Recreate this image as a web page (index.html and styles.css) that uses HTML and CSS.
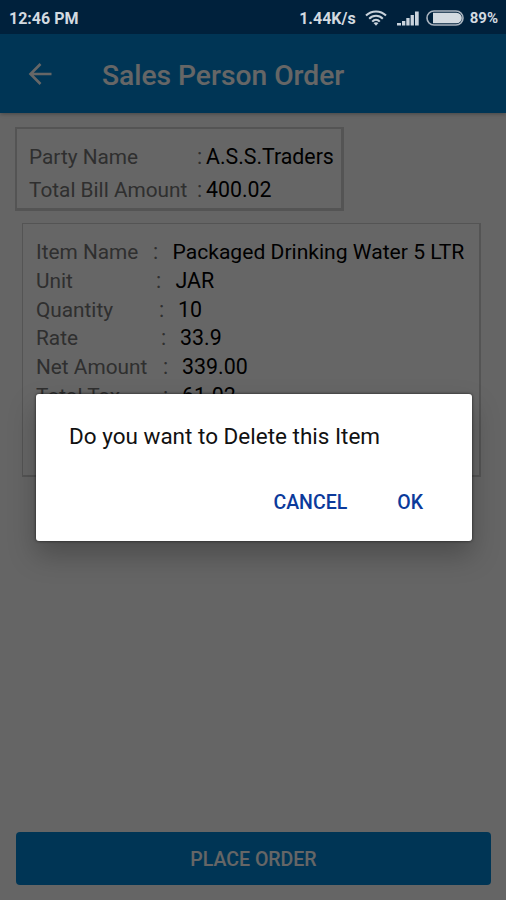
FILE: index.html
```html
<!DOCTYPE html>
<html lang="en">

<head>
    <meta charset="UTF-8">
    <meta name="viewport" content="width=device-width, initial-scale=1.0">
    <title>Sales Person Order</title>
    <link rel="stylesheet" href="styles.css">
</head>

<body>
    <div class="statusbar">
        <span class="time">12:46 PM</span>
        <span class="speed">1.44K/s</span>
        <svg class="wifi" width="22" height="16" viewBox="0 0 22 16">
            <g fill="none" stroke="#c9d3dc" stroke-width="2">
                <path d="M1 5.5C6.5 0 15.5 0 21 5.5" />
                <path d="M4.2 8.7C8 4.8 14 4.8 17.8 8.7" />
                <path d="M7.2 11.7C9.5 9 12.5 9 14.8 11.7" />
            </g>
            <path d="M8.5 13Q11 11.3 13.5 13L11 15.8Z" fill="#c9d3dc" />
        </svg>
        <svg class="signal" width="22" height="16" viewBox="0 0 22 16" fill="#c9d3dc">
            <rect x="0" y="13" width="4" height="2.5" />
            <rect x="5" y="11" width="3.3" height="4.5" />
            <rect x="9.3" y="8" width="3.3" height="7.5" />
            <rect x="13.6" y="5" width="3.3" height="10.5" />
            <rect x="18" y="1.5" width="3.7" height="14" />
        </svg>
        <svg class="battery" width="38" height="16" viewBox="0 0 38 16">
            <rect x="1" y="1" width="36" height="14" rx="7" fill="none" stroke="#aab4bf" stroke-width="1.6" />
            <path d="M7 2.700H30.500a5.300 5.300 0 0 1 0 10.600H7Z" fill="#d3dae0" />
        </svg>
        <span class="percent">89%</span>
    </div>

    <div class="screen">
        <header class="toolbar">
            <svg width="24" height="22" viewBox="0 0 24 22" fill="none" stroke="#fff" stroke-width="2.6">
                <path d="M23.5 11H2.5M12.5 1L2.5 11L12.5 21" />
            </svg>
            <h1>Sales Person Order</h1>
        </header>

        <main>
            <div class="card party">
                <div class="row"><span class="label">Party Name</span><span class="colon">:</span><span class="value">A.S.S.Traders</span></div>
                <div class="row"><span class="label">Total Bill Amount</span><span class="colon">:</span><span class="value">400.02</span></div>
            </div>

            <div class="card item">
                <div class="row"><span class="label">Item Name</span><span class="colon">:</span><span class="value">Packaged Drinking Water 5 LTR</span></div>
                <div class="row"><span class="label">Unit</span><span class="colon">:</span><span class="value">JAR</span></div>
                <div class="row"><span class="label">Quantity</span><span class="colon">:</span><span class="value">10</span></div>
                <div class="row"><span class="label">Rate</span><span class="colon">:</span><span class="value">33.9</span></div>
                <div class="row"><span class="label">Net Amount</span><span class="colon">:</span><span class="value">339.00</span></div>
                <div class="row"><span class="label">Total Tax</span><span class="colon">:</span><span class="value">61.02</span></div>
            </div>
        </main>

        <button class="place-order">PLACE ORDER</button>
    </div>

    <div class="overlay">
        <div class="dialog">
            <p>Do you want to Delete this Item</p>
            <div class="actions">
                <button>CANCEL</button>
                <button>OK</button>
            </div>
        </div>
    </div>
</body>

</html>
```
FILE: styles.css
```css
* {
    box-sizing: border-box;
}

body {
    margin: 0;
    height: 900px;
    display: flex;
    flex-direction: column;
    overflow: hidden;
    font-family: Roboto, sans-serif;
    background-color: #fcfcfc;
}

button {
    border: none;
    font-family: inherit;
    cursor: pointer;
}

/* Status bar */
.statusbar {
    position: relative;
    z-index: 2;
    display: flex;
    align-items: center;
    height: 34px;
    padding: 2px 8px 0 9px;
    background-color: #00213c;
    color: #d3dae0;
    font-size: 16px;
    font-weight: 700;
    white-space: nowrap;
}

.speed {
    margin-left: auto;
}

.wifi {
    margin-left: 9px;
}

.signal {
    margin-left: 10px;
}

.battery {
    margin-left: 7px;
}

.percent {
    margin-left: 6px;
    font-size: 15px;
}

/* Page */
.screen {
    flex: 1;
    display: flex;
    flex-direction: column;
}

.toolbar {
    display: flex;
    align-items: center;
    height: 79px;
    padding: 0 28px;
    background-color: #0086d5;
    color: #fff;
    box-shadow: 0 1px 4px rgba(0, 0, 0, 0.3);
}

.toolbar h1 {
    margin: 4px 0 0 50px;
    font-size: 28.2px;
    font-weight: 500;
    white-space: nowrap;
}

main {
    flex: 1;
    padding: 14px 15px;
}

.card {
    background-color: #fff;
    border: 2px solid #d2d2d2;
    white-space: nowrap;
}

.row {
    display: flex;
    align-items: baseline;
    font-size: 21.4px;
}

.label,
.colon {
    flex-shrink: 0;
    color: #757575;
}

.label {
    font-size: 20.8px;
}

.value {
    color: #000;
}

.party {
    width: 329px;
    height: 84px;
    padding: 12px 12px 0;
    border-right-width: 3px;
    border-bottom-width: 3px;
}

.party .row {
    line-height: 31.5px;
}

.party .label {
    width: 168px;
}

.party .colon {
    width: 9px;
}

.party .value {
    font-size: 21.3px;
}

.item {
    width: 459px;
    height: 254px;
    margin: 12px 0 0 7px;
    padding: 13px 12px 0;
    border-width: 1px 2px 2px 1px;
    padding: 14px 12px 0 13px;
}

.item .row {
    height: 28.8px;
    line-height: 28.8px;
}

.item .label {
    width: 117px;
}

.item .colon {
    width: 19.5px;
}

.item .row:first-child .value {
    font-size: 21.1px;
}

.item .row:nth-child(2) .label {
    width: 120px;
}

.item .row:nth-child(3) .label {
    width: 123px;
}

.item .row:nth-child(4) .label {
    width: 125px;
}

.item .row:nth-child(n+5) .label {
    width: 127px;
}

.item .row:nth-child(n+3) .colon {
    width: 19px;
}

.place-order {
    height: 53px;
    margin: 0 15px 15px 16px;
    padding-top: 3px;
    border-radius: 4px;
    background-color: #0086d5;
    color: #fff;
    font-size: 19.5px;
    font-weight: 500;
}

/* Confirm dialog */
.overlay {
    position: absolute;
    top: 0;
    left: 0;
    width: 100%;
    height: 900px;
    z-index: 1;
    padding: 394px 34px 0 36px;
    background-color: rgba(0, 0, 0, 0.6);
}

.dialog {
    height: 147px;
    padding: 28px 29px 0 33px;
    border-radius: 3px;
    background-color: #fff;
    box-shadow: 0 0 3px rgba(0, 0, 0, 0.7), 0 14px 28px rgba(0, 0, 0, 0.25);
}

.dialog p {
    margin: 0;
    font-size: 22.5px;
    line-height: 28px;
    color: #111;
    white-space: nowrap;
}

.actions {
    display: flex;
    justify-content: flex-end;
    gap: 10px;
    margin-top: 34px;
}

.actions button {
    height: 36px;
    padding: 0 20px;
    background: none;
    color: #0b3a9b;
    font-size: 19.5px;
    font-weight: 500;
}
```
